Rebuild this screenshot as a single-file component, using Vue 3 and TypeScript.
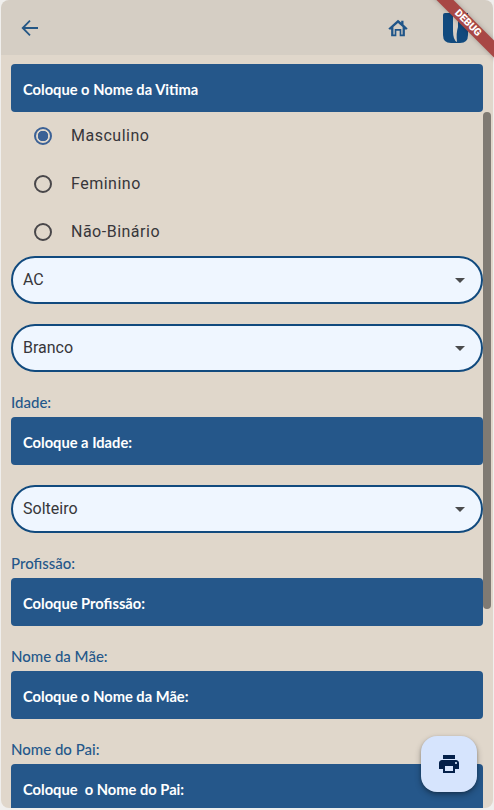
<script setup lang="ts">
const radios = [
  { label: 'Masculino', on: true },
  { label: 'Feminino', on: false },
  { label: 'Não-Binário', on: false },
]
</script>

<template>
  <div class="screen">
    <header class="bar">
      <svg class="back" viewBox="0 0 24 24" width="24" height="24"><path d="M20 12H5.500M12 4.700 4.700 12l7.300 7.300" /></svg>
      <div class="spacer"></div>
      <svg class="home" viewBox="0 0 24 24" width="22" height="22"><path fill-rule="evenodd" d="M12 3l3.500 3V4H18v4.200l4.500 4.400-1 1h-2V21h-5.700v-6h-3.600v6H4.500v-7.400h-2l-1-1zm0 3.500L7 11v8h1.400v-6h7.200v6H17v-8z" /></svg>
      <svg class="logo" viewBox="0 0 25 30" width="25" height="30"><path d="M0 2Q0 0 2 0H9L10 1V18Q10 27 14 29 13 20 15 14V0H25V22Q25 30 17 30H8Q0 30 0 22Z" /></svg>
    </header>
    <main class="body">
      <div class="field">Coloque o Nome da Vitima</div>
      <div v-for="r in radios" :key="r.label" class="radio">
        <span class="dot" :class="{ on: r.on }"></span>
        <span>{{ r.label }}</span>
      </div>
      <div class="select">AC<i class="caret"></i></div>
      <div class="select gap20">Branco<i class="caret"></i></div>
      <label class="lbl">Idade:</label>
      <div class="field">Coloque a Idade:</div>
      <div class="select gap20">Solteiro<i class="caret"></i></div>
      <label class="lbl">Profissão:</label>
      <div class="field">Coloque Profissão:</div>
      <label class="lbl">Nome da Mãe:</label>
      <div class="field">Coloque o Nome da Mãe:</div>
      <label class="lbl">Nome do Pai:</label>
      <div class="field">Coloque&nbsp; o Nome do Pai:</div>
    </main>
    <div class="thumb"></div>
    <button class="fab" type="button">
      <svg viewBox="0 0 24 24" width="24" height="24"><path d="M19 8H5c-1.660 0-3 1.340-3 3v6h4v4h12v-4h4v-6c0-1.660-1.340-3-3-3zm-3 11H8v-5h8zm3-7c-.55 0-1-.45-1-1s.45-1 1-1 1 .45 1 1-.45 1-1 1zm-1-9H6v4h12z" /></svg>
    </button>
    <div class="ribbon">DEBUG</div>
  </div>
</template>

<style>
html, body { margin: 0; background: #f0efed; }
</style>

<style scoped>
.screen {
  position: relative;
  width: 494px;
  height: 810px;
  overflow: hidden;
  box-sizing: border-box;
  padding: 0 1px 2px 1px;
  font-family: Roboto, sans-serif;
}
.bar {
  display: flex;
  align-items: center;
  height: 55px;
  padding: 0 0 0 17px;
  background: #d5cec4;
  border-radius: 8px 8px 0 0;
}
.spacer { flex: 1; }
.back { fill: none; stroke: #255785; stroke-width: 1.800; }
.home { fill: #1f5589; margin-right: 34px; }
.logo { fill: #114a7e; margin: 0 25px 0 0; }
.body {
  height: 753px;
  overflow: hidden;
  box-sizing: border-box;
  padding: 9px 10px 0 10px;
  background: #e0d7cb;
  border-radius: 0 0 8px 8px;
}
.field {
  display: flex;
  align-items: center;
  box-sizing: border-box;
  height: 48px;
  flex: none;
  padding: 1px 0 0 12px;
  border-radius: 4px;
  background: #25578a;
  color: #fff;
  font: 700 14.700px Lato, sans-serif;
}
.radio {
  display: flex;
  align-items: center;
  height: 47px;
  padding: 0 0 1px 23px;
  gap: 19px;
  color: #37363a;
  font-size: 16px;
  letter-spacing: 0.5px;
}
.dot {
  box-sizing: border-box;
  width: 18px;
  height: 18px;
  border: 2px solid #49474a;
  border-radius: 50%;
}
.dot.on {
  border-color: #3b6196;
  background: radial-gradient(circle, #3b6196 0 5px, transparent 5.500px);
}
.select {
  box-sizing: border-box;
  display: flex;
  align-items: center;
  justify-content: space-between;
  height: 48px;
  padding: 0 16px 2px 10px;
  border: 2px solid #114a7e;
  border-radius: 24px;
  background: #eff6ff;
  color: #37363a;
  font-size: 16px;
}
.gap20 { margin-top: 20px; }
.caret {
  width: 0;
  height: 0;
  margin-top: 2px;
  border-left: 5px solid transparent;
  border-right: 5px solid transparent;
  border-top: 5px solid #4a4b4d;
}
.lbl {
  display: flex;
  align-items: flex-end;
  height: 45px;
  padding: 0 0 6px 0;
  box-sizing: border-box;
  color: #25578a;
  font: 500 15px Lato, sans-serif;
}
.thumb {
  position: absolute;
  left: 483px;
  top: 112px;
  width: 8px;
  height: 497px;
  border-radius: 4px;
  background: #7f7a73;
}
.fab {
  position: absolute;
  left: 421px;
  top: 736px;
  display: flex;
  align-items: center;
  justify-content: center;
  width: 56px;
  height: 56px;
  padding: 0;
  border: 0;
  border-radius: 16px;
  background: #d6e4fd;
  box-shadow: 0 3px 6px rgba(0, 0, 0, 0.3), 0 1px 3px rgba(0, 0, 0, 0.2);
}
.fab svg { fill: #04204a; }
.ribbon {
  position: absolute;
  left: 418px;
  top: 17px;
  width: 100px;
  height: 12px;
  transform: rotate(45deg);
  background: #a84745;
  box-shadow: 0 0 5px rgba(0, 0, 0, 0.25);
  color: #fff;
  font: 900 10.200px/12px Roboto, sans-serif;
  text-align: center;
}
</style>
